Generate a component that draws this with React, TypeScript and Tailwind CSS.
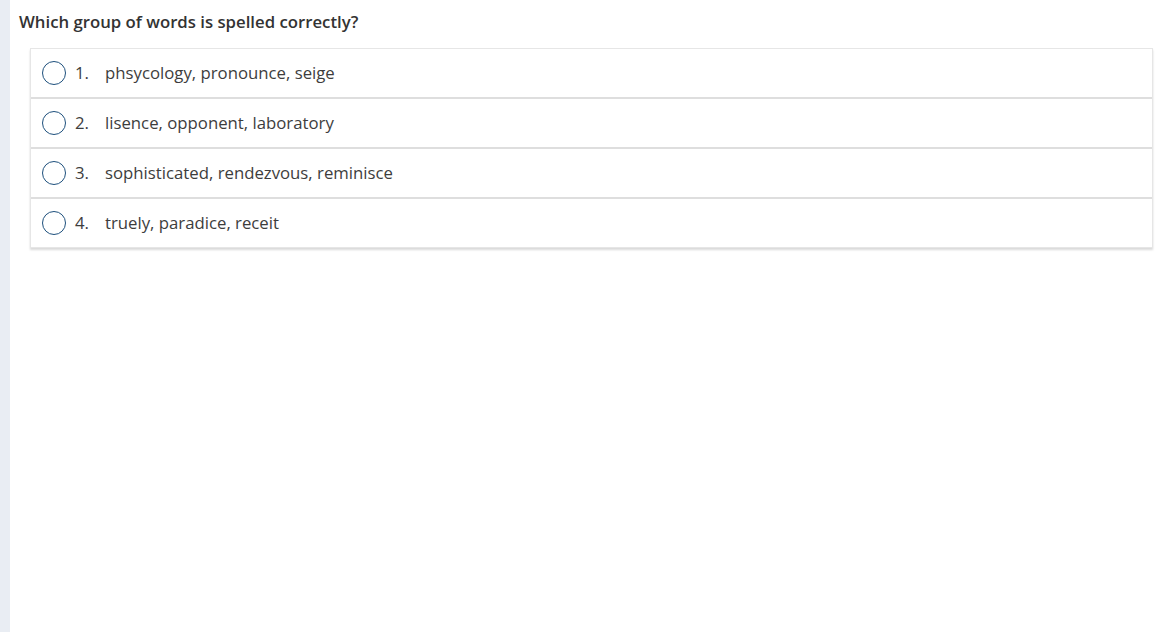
import React from 'react';

const OPTIONS = [
  'phsycology, pronounce, seige',
  'lisence, opponent, laboratory',
  'sophisticated, rendezvous, reminisce',
  'truely, paradice, receit',
];

export default function App() {
  return (
    <div className="flex h-[632px] w-full bg-white" style={{ fontFamily: '"Open Sans", sans-serif' }}>
      <div className="w-[10px] shrink-0 bg-[#e9edf3]" />
      <div className="flex-1 pl-[9px] pr-[9px]">
        <h1 className="pt-[10px] text-[16.75px] font-semibold leading-[24px] text-[#333]">
          Which group of words is spelled correctly?
        </h1>
        <div className="mt-[14px] ml-[11px] border border-[#e6e6e6] bg-white shadow-[0_2px_2px_rgba(0,0,0,0.15)]">
          {OPTIONS.map((text, i) => (
            <div
              key={i}
              className={`flex items-center pl-[11px] ${i < OPTIONS.length - 1 ? 'h-[50px] border-b-2 border-[#dedede]' : 'h-[48px]'}`}
            >
              <span className="h-[24px] w-[24px] shrink-0 rounded-full border-[1.5px] border-[#1d4f7c]" />
              <span className="ml-[9px] w-[30px] text-[16.75px] text-[#3d3d3d]">{i + 1}.</span>
              <span className="text-[16.75px] text-[#3d3d3d]">{text}</span>
            </div>
          ))}
        </div>
      </div>
    </div>
  );
}
